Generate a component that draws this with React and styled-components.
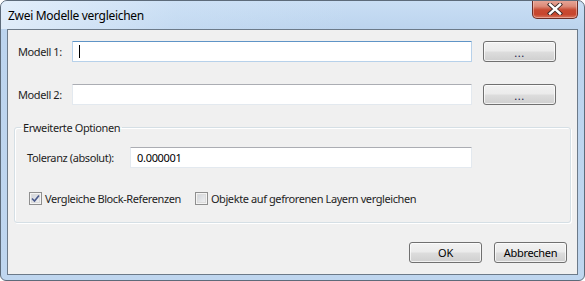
import React from "react";
import styled, { createGlobalStyle } from "styled-components";

const Global = createGlobalStyle`
  html, body { margin: 0; padding: 0; background: #ffffff; }
  body { font-family: "Noto Sans", "Liberation Sans", sans-serif; }
  * { box-sizing: border-box; }
`;

const Window = styled.div`
  width: 585px;
  height: 281px;
  display: flex;
  flex-direction: column;
  border: 1px solid #5d6b7a;
  border-radius: 7px 7px 6px 6px;
  background: linear-gradient(180deg, #c9def4 0px, #bcd4ee 28px, #bfd6ef 100%);
  padding: 0 6px 5px 6px;
  overflow: hidden;
`;

const TitleBar = styled.div`
  height: 28px;
  display: flex;
  align-items: flex-start;
  justify-content: space-between;
  margin: 0 -6px 0 -6px;
  padding: 0 6px 0 7px;
  background: linear-gradient(90deg, rgba(235,244,253,0.75) 0%, rgba(214,231,248,0.3) 30%, rgba(190,214,240,0) 60%);
`;

const Title = styled.div`
  font-family: "Noto Sans", "Liberation Sans", sans-serif;
  font-size: 12px;
  line-height: 16px;
  padding-top: 7px;
  color: #000;
  letter-spacing: -0.3px;
`;

const CloseButton = styled.div`
  width: 46px;
  height: 19px;
  margin-top: -1px;
  border: 1px solid #6b2d26;
  border-top: none;
  border-radius: 0 0 5px 5px;
  background: linear-gradient(180deg, #e8a99b 0%, #dc8a78 35%, #c84a32 55%, #c7452d 80%, #d6765f 100%);
  box-shadow: inset 0 0 0 1px rgba(255, 220, 210, 0.45);
  display: flex;
  align-items: center;
  justify-content: center;
`;

const Client = styled.div`
  flex: 1;
  display: flex;
  flex-direction: column;
  border: 1px solid #6c7a89;
  background: #f0f0f0;
  font-size: 11px;
  color: #000;
`;

const FileRow = styled.div`
  display: flex;
  align-items: center;
  margin-top: ${(p) => p.$top}px;
  padding-left: 10px;
`;

const Label = styled.span`
  width: ${(p) => p.$w}px;
  flex-shrink: 0;
  font-size: 11px;
  line-height: 13px;
  color: #1e1e1e;
  letter-spacing: -0.4px;
`;

const TextBox = styled.div`
  width: ${(p) => p.$w}px;
  height: 21px;
  background: #fff;
  border: 1px solid ${(p) => (p.$focus ? "#b7d1ea" : "#e3e9ef")};
  border-top-color: ${(p) => (p.$focus ? "#5f94c6" : "#abadb3")};
  border-radius: 1px;
  display: flex;
  align-items: center;
  padding-left: 6px;
  font-size: 11px;
  letter-spacing: -0.3px;
`;

const Caret = styled.span`
  width: 1px;
  height: 13px;
  background: #000;
`;

const Button = styled.div`
  width: 73px;
  height: 21px;
  margin-left: ${(p) => p.$ml || 0}px;
  border: 1px solid #707070;
  border-radius: 3px;
  background: linear-gradient(180deg, #f2f2f2 0%, #ebebeb 48%, #dddddd 52%, #cfcfcf 100%);
  box-shadow: inset 0 0 0 1px rgba(255, 255, 255, 0.7);
  display: flex;
  align-items: center;
  justify-content: center;
  font-size: 11px;
  line-height: 13px;
  letter-spacing: -0.3px;
  color: #000;
`;

const Dots = styled.span`
  letter-spacing: 0.6px;
  color: #1a1a4a;
  margin-top: 1px;
`;

const Group = styled.fieldset`
  margin: 16px 6px 0 6px;
  padding: 0 0 0 12px;
  min-width: 0;
  border: 1px solid #d5dfe5;
  border-radius: 3px;
  box-shadow: inset 1px 1px 0 #fff, 1px 1px 0 #fff;
  height: 102px;
`;

const Legend = styled.legend`
  padding: 0 2px;
  margin-left: -6px;
  font-size: 11px;
  line-height: 13px;
  letter-spacing: -0.4px;
  color: #1e1e1e;
`;

const GroupRow = styled.div`
  display: flex;
  align-items: center;
  margin-top: ${(p) => p.$top}px;
`;

const CheckLabel = styled.label`
  display: flex;
  align-items: center;
  margin-left: ${(p) => p.$ml || 0}px;
  font-size: 11px;
  line-height: 13px;
  letter-spacing: -0.4px;
  color: #1e1e1e;
`;

const Box = styled.span`
  width: 13px;
  height: 13px;
  margin-right: 3px;
  border: 1px solid #8f8f8f;
  display: flex;
  align-items: center;
  justify-content: center;
  box-shadow: inset 0 0 0 1px #f4f4f4, inset 0 0 0 2px #dcdcdc;
  background: linear-gradient(135deg, #cbcfd5 0%, #f6f6f6 100%);
`;

const Footer = styled.div`
  margin-top: auto;
  margin-bottom: 11px;
  padding-right: 10px;
  display: flex;
  justify-content: flex-end;
`;

function CloseX() {
  return (
    <svg width="16" height="12" viewBox="0 0 16 12">
      <path
        d="M3 1.5 L13 10.5 M13 1.5 L3 10.5"
        stroke="#3b2a28"
        strokeWidth="4.2"
        strokeLinecap="square"
        fill="none"
      />
      <path
        d="M3 1.5 L13 10.5 M13 1.5 L3 10.5"
        stroke="#ffffff"
        strokeWidth="2.4"
        strokeLinecap="square"
        fill="none"
      />
    </svg>
  );
}

function CheckBox({ checked }) {
  return (
    <Box>
      {checked && (
        <svg width="9" height="9" viewBox="0 0 9 9">
          <path d="M1 4.5 L3.5 7 L8 1.5" stroke="#4a5a8c" strokeWidth="1.6" fill="none" />
        </svg>
      )}
    </Box>
  );
}

export default function App() {
  return (
    <>
      <Global />
      <Window>
        <TitleBar>
          <Title>Zwei Modelle vergleichen</Title>
          <CloseButton>
            <CloseX />
          </CloseButton>
        </TitleBar>
        <Client>
          <FileRow $top={11}>
            <Label $w={54}>Modell 1:</Label>
            <TextBox $w={400} $focus>
              <Caret />
            </TextBox>
            <Button $ml={11}>
              <Dots>...</Dots>
            </Button>
          </FileRow>
          <FileRow $top={22}>
            <Label $w={54}>Modell 2:</Label>
            <TextBox $w={400} />
            <Button $ml={11}>
              <Dots>...</Dots>
            </Button>
          </FileRow>
          <Group>
            <Legend>Erweiterte Optionen</Legend>
            <GroupRow $top={13}>
              <Label $w={103}>Toleranz (absolut):</Label>
              <TextBox $w={342}>0.000001</TextBox>
            </GroupRow>
            <GroupRow $top={24}>
              <CheckLabel $ml={2}>
                <CheckBox checked />
                Vergleiche Block-Referenzen
              </CheckLabel>
              <CheckLabel $ml={14}>
                <CheckBox />
                Objekte auf gefrorenen Layern vergleichen
              </CheckLabel>
            </GroupRow>
          </Group>
          <Footer>
            <Button>OK</Button>
            <Button $ml={12}>Abbrechen</Button>
          </Footer>
        </Client>
      </Window>
    </>
  );
}
